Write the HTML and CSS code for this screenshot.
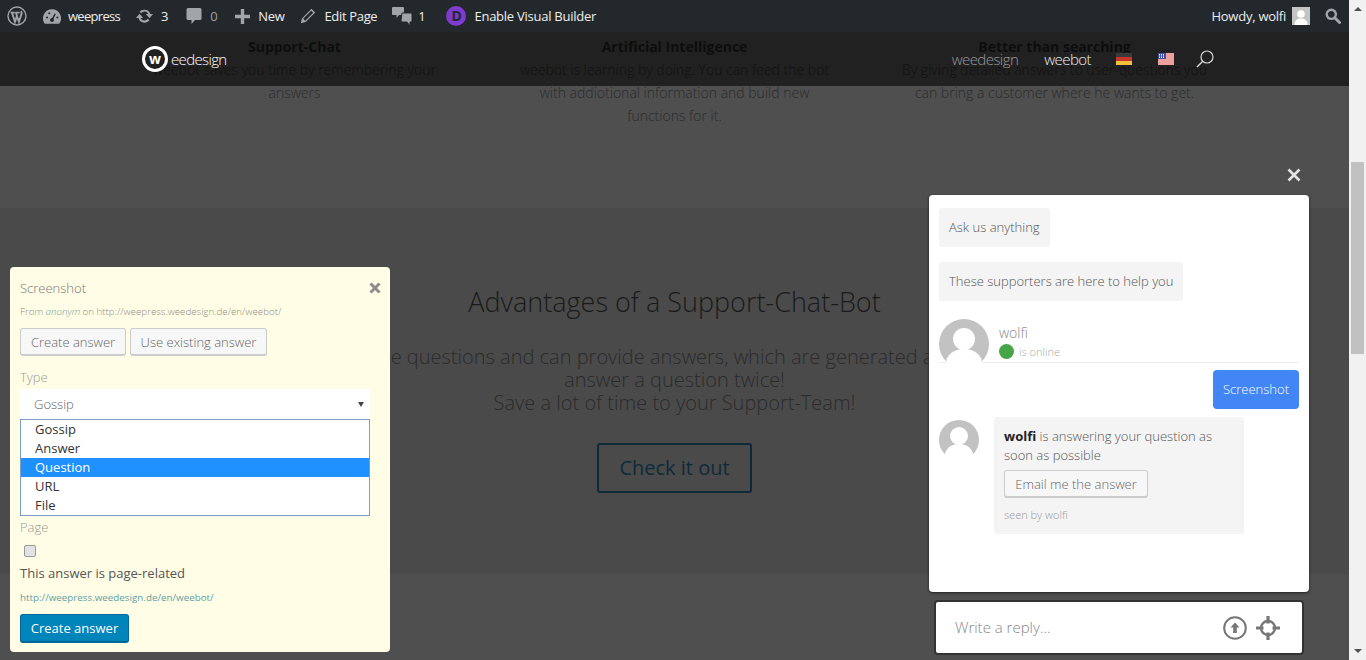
FILE: index.html
```html
<!DOCTYPE html>
<html lang="en">
<head>
<meta charset="utf-8">
<title>weebot</title>
<link rel="stylesheet" href="styles.css">
</head>
<body>
<div class="shell">
  <div class="viewport">
    <header class="adminbar">
      <div class="ab-group">
        <svg class="ab-wp" viewBox="0 0 20 20"><circle cx="10" cy="10" r="9" fill="none" stroke="#a0a5aa" stroke-width="1.4"/><path d="M3.600 6.600h4.200M8.200 6.600h4.400M5 6.800l3 9 2.200-6.400M8.900 6.800l3 9 2.400-7c.5-1.400.3-2.700-.4-3.600" fill="none" stroke="#a0a5aa" stroke-width="1.900"/></svg>
        <span class="ab-item ab-site"><svg class="ab-ico ab-gauge" viewBox="0 0 20 16"><path d="M10 0a10 10 0 0 0-8 16h16a10 10 0 0 0-8-16z" fill="#a0a5aa"/><circle cx="10" cy="12" r="2.200" fill="#23282d"/><path d="M10 12l3.500-7" stroke="#23282d" stroke-width="1.600"/><circle cx="4.500" cy="9" r="1.100" fill="#23282d"/><circle cx="7" cy="4.500" r="1.100" fill="#23282d"/><circle cx="16" cy="9" r="1.100" fill="#23282d"/></svg>weepress</span>
        <span class="ab-item ab-updates"><svg class="ab-ico ab-refresh" viewBox="0 0 20 16"><path d="M10 1.500A6.500 6.500 0 0 1 16.200 6H19l-3.800 4.400L11.400 6h2.600A4.300 4.300 0 0 0 6.600 5L4.700 3.400A6.500 6.500 0 0 1 10 1.500zM1 10l3.800-4.400L8.600 10H6a4.300 4.300 0 0 0 7.400 1l1.900 1.600A6.500 6.500 0 0 1 3.800 10z" fill="#a0a5aa"/></svg>3</span>
        <span class="ab-item ab-comments ab-dim"><svg class="ab-ico ab-bubble" viewBox="0 0 16 18"><path d="M2 1h12a1.500 1.500 0 0 1 1.500 1.500v9A1.500 1.500 0 0 1 14 13h-5l-3.500 4v-4H2a1.500 1.500 0 0 1-1.500-1.500v-9A1.500 1.500 0 0 1 2 1z" fill="#a0a5aa"/></svg>0</span>
        <span class="ab-item ab-new"><svg class="ab-ico ab-plus" viewBox="0 0 15 15"><path d="M5.800 0h3.400v5.800H15v3.400H9.200V15H5.800V9.200H0V5.800h5.800z" fill="#a0a5aa"/></svg>New</span>
        <span class="ab-item ab-edit"><svg class="ab-ico ab-pencil" viewBox="0 0 16 16"><path d="M11.500.8l3.700 3.700L5.600 14.100 .8 15.200l1.100-4.800zM3.200 10.800l2 2 8-8-2-2z" fill="#a0a5aa" fill-rule="evenodd"/></svg>Edit Page</span>
        <span class="ab-item ab-mod"><svg class="ab-ico ab-bubbles" viewBox="0 0 20 20"><path d="M1 1h10a1 1 0 0 1 1 1v6a1 1 0 0 1-1 1H7l-2.500 3V9H1a1 1 0 0 1-1-1V2a1 1 0 0 1 1-1z" fill="#a0a5aa"/><path d="M10 7h9a1 1 0 0 1 1 1v7a1 1 0 0 1-1 1h-1v4l-3-4h-5a1 1 0 0 1-1-1z" fill="#a0a5aa" stroke="#23282d"/></svg>1</span>
        <span class="ab-item ab-divi"><span class="divi-badge">D</span>Enable Visual Builder</span>
      </div>
      <div class="ab-group">
        <span class="ab-howdy">Howdy, wolfi</span>
        <svg class="ab-avatar" viewBox="0 0 18 18"><rect width="18" height="18" fill="#c4c4c4"/><circle cx="9" cy="7" r="3.800" fill="#fff"/><path d="M2.500 18c0-5 3-6.500 6.500-6.500s6.500 1.500 6.500 6.500z" fill="#fff"/></svg>
        <svg class="ab-search" viewBox="0 0 16 16"><circle cx="6.300" cy="6.300" r="4.600" fill="none" stroke="#a0a5aa" stroke-width="2.400"/><path d="M9.800 9.800l4.700 4.700" stroke="#a0a5aa" stroke-width="3" stroke-linecap="round"/></svg>
      </div>
    </header>

    <main class="page">
      <section class="features">
        <div class="feature">
          <h3>Support-Chat</h3>
          <p>weebot saves you time by remembering your answers</p>
        </div>
        <div class="feature">
          <h3>Artificial Intelligence</h3>
          <p>weebot is learning by doing. You can feed the bot with addiotional information and build new functions for it.</p>
        </div>
        <div class="feature">
          <h3>Better than searching</h3>
          <p>By giving detailed answers to user-questions you can bring a customer where he wants to get.</p>
        </div>
      </section>
      <section class="advantages">
        <h2>Advantages of a Support-Chat-Bot</h2>
        <p>weebot understands the questions and can provide answers, which are generated automatically. So you never<br>answer a question twice!<br>Save a lot of time to your Support-Team!</p>
        <a class="check-btn">Check it out</a>
      </section>
      <section class="lower"></section>
    </main>

    <nav class="sitenav">
      <div class="logo">
        <span class="logo-mark">w</span><span class="logo-text">eedesign</span>
      </div>
      <div class="menu">
        <span class="menu-item">weedesign</span>
        <span class="menu-item menu-active">weebot</span>
        <svg class="flag flag-de" viewBox="0 0 16 12"><rect width="16" height="4" fill="#3a3a3a"/><rect y="4" width="16" height="4" fill="#c8332b"/><rect y="8" width="16" height="4" fill="#f0c23c"/></svg>
        <svg class="flag flag-us" viewBox="0 0 16 12"><rect width="16" height="12" fill="#fff"/><path d="M0 1h16M0 3h16M0 5h16M0 7h16M0 9h16M0 11h16" stroke="#d8433c"/><rect width="8" height="6" fill="#3f4fa8"/><path d="M1 1.500h6M1 3h6M1 4.500h6" stroke="#fff" stroke-dasharray="1 1"/></svg>
        <svg class="nav-search" viewBox="0 0 18 18"><circle cx="11" cy="7" r="6" fill="none" stroke="#d8d8d8" stroke-width="1.200"/><path d="M6.800 11.300L1 17" stroke="#d8d8d8" stroke-width="1.400"/></svg>
      </div>
    </nav>

    <aside class="ticket">
      <div class="ticket-head">
        <span class="ticket-title">Screenshot</span>
        <svg class="ticket-close" viewBox="0 0 12 12"><path d="M1.500 1.500l9 9M10.500 1.500l-9 9" stroke="#8c8c8c" stroke-width="3"/></svg>
      </div>
      <div class="ticket-from">From <em>anonym</em> on http://weepress.weedesign.de/en/weebot/</div>
      <div class="ticket-actions">
        <span class="ghost-btn btn-create">Create answer</span>
        <span class="ghost-btn btn-existing">Use existing answer</span>
      </div>
      <div class="field-label label-type">Type</div>
      <div class="select-box"><span>Gossip</span><i class="select-arrow"></i></div>
      <ul class="select-list">
        <li>Gossip</li>
        <li>Answer</li>
        <li class="selected">Question</li>
        <li>URL</li>
        <li>File</li>
      </ul>
      <div class="field-label label-page">Page</div>
      <input class="page-check" type="checkbox">
      <div class="check-label">This answer is page-related</div>
      <div class="ticket-link">http://weepress.weedesign.de/en/weebot/</div>
      <span class="primary-btn">Create answer</span>
    </aside>

    <svg class="chat-close" viewBox="0 0 14 14"><path d="M1.500 1.500l11 11M12.500 1.500l-11 11" stroke="#e6e6e6" stroke-width="2.600"/></svg>

    <aside class="chat">
      <div class="bubble bubble-first">Ask us anything</div>
      <div class="bubble bubble-second">These supporters are here to help you</div>
      <div class="agent">
        <svg class="avatar avatar-lg" viewBox="0 0 50 50"><circle cx="25" cy="25" r="25" fill="#c2c2c2"/><circle cx="25" cy="20" r="11" fill="#fff"/><ellipse cx="25" cy="44" rx="18" ry="14" fill="#fff"/></svg>
        <div class="agent-info">
          <div class="agent-name">wolfi</div>
          <div class="agent-status"><i class="dot"></i>is online</div>
        </div>
      </div>
      <div class="own-row"><div class="bubble-own">Screenshot</div></div>
      <div class="reply">
        <svg class="avatar avatar-sm" viewBox="0 0 40 40"><circle cx="20" cy="20" r="20" fill="#c2c2c2"/><circle cx="20" cy="16" r="9" fill="#fff"/><ellipse cx="20" cy="35" rx="14" ry="11" fill="#fff"/></svg>
        <div class="reply-card">
          <p><b>wolfi</b> is answering your question as soon as possible</p>
          <span class="ghost-btn btn-email">Email me the answer</span>
          <div class="seen">seen by wolfi</div>
        </div>
      </div>
    </aside>

    <div class="composer">
      <span class="composer-text">Write a reply...</span>
      <svg class="composer-ico ico-upload" viewBox="0 0 24 24"><circle cx="12" cy="12" r="10.800" fill="none" stroke="#777" stroke-width="2"/><path d="M12 6.500l4.500 5h-2.700v5.500h-3.600v-5.500H7.500z" fill="#777"/></svg>
      <svg class="composer-ico ico-target" viewBox="0 0 24 24"><circle cx="12" cy="12" r="7" fill="none" stroke="#777" stroke-width="2.400"/><path d="M12 0v7.500M12 16.500v7.500M0 12h7.500M16.500 12h7.500" stroke="#777" stroke-width="3.200"/></svg>
    </div>
  </div>

  <div class="scrollbar">
    <i class="sb-up"></i>
    <div class="sb-track"><div class="sb-thumb"></div></div>
    <i class="sb-down"></i>
  </div>
</div>
</body>
</html>
```

FILE: styles.css
```css
* { box-sizing: border-box; }
html, body { margin: 0; height: 100%; overflow: hidden; }
body { font-family: "Open Sans", "Liberation Sans", sans-serif; color: #2b2b2b; background: #4f4f4f; }

.shell { display: flex; width: 1366px; height: 660px; }
.viewport { position: relative; flex: 1; height: 660px; overflow: hidden; display: flex; flex-direction: column; }

/* Admin bar */
.adminbar { flex: none; height: 32px; background: #23282d; display: flex; justify-content: space-between; align-items: center; color: #eee; font-size: 13px; letter-spacing: -.33px; line-height: 32px; position: relative; z-index: 3; }
.ab-group { display: flex; align-items: center; }
.ab-wp { width: 20px; height: 20px; margin-left: 7px; margin-right: 1px; }
.ab-item { display: flex; align-items: center; }
.ab-dim { color: #9aa0a5; }
.ab-ico { flex: none; }
.ab-site { margin-left: 15px; letter-spacing: -.7px; }
.ab-gauge { width: 18px; height: 15px; margin-right: 7px; }
.ab-updates { margin-left: 15px; }
.ab-refresh { width: 19px; height: 16px; margin-right: 7px; }
.ab-comments { margin-left: 18px; }
.ab-bubble { width: 16px; height: 18px; margin-right: 8px; }
.ab-new { margin-left: 18px; }
.ab-plus { width: 15px; height: 15px; margin-right: 8px; }
.ab-edit { margin-left: 16px; }
.ab-pencil { width: 16px; height: 16px; margin-right: 8px; }
.ab-mod { margin-left: 15px; }
.ab-bubbles { width: 20px; height: 20px; margin-right: 6px; }
.ab-divi { margin-left: 21px; letter-spacing: -.25px; }
.divi-badge { width: 20px; height: 20px; margin-right: 8px; border-radius: 50%; background: #7e3bd0; color: #23282d; font-size: 14px; font-weight: 700; line-height: 20px; text-align: center; }
.ab-howdy { margin-right: 6px; letter-spacing: -.25px; }
.ab-avatar { width: 18px; height: 18px; margin-right: 15px; }
.ab-search { width: 16px; height: 16px; margin-right: 8px; }

/* Page under the overlay */
.page { flex: 1; display: flex; flex-direction: column; }
.features { height: 176px; background: #4f4f4f; display: flex; justify-content: center; padding-top: 5px; }
.feature { width: 380px; text-align: center; padding: 0 30px; }
.feature h3 { margin: 0; font-size: 14px; line-height: 20px; font-weight: 700; color: #1f1f1f; }
.feature p { margin: 1px 0 0; font-size: 14px; line-height: 23px; font-weight: 300; color: #2b2b2b; }
.advantages { height: 366px; background: #4a4a4a; text-align: center; display: flex; flex-direction: column; align-items: center; padding-top: 75px; overflow: hidden; }
.advantages h2 { margin: 0; font-size: 27px; line-height: 38px; font-weight: 300; color: #1a1a1a; white-space: nowrap; }
.advantages p { margin: 24px 0 0; font-size: 20px; line-height: 23px; font-weight: 300; color: #2b2b2b; white-space: nowrap; }
.check-btn { margin-top: 29px; width: 155px; height: 50px; border: 2px solid #0d2a38; border-radius: 3px; font-size: 20px; line-height: 46px; color: #0e2a38; }
.lower { flex: 1; background: #4f4f4f; }

/* Translucent site nav */
.sitenav { position: absolute; top: 32px; left: 0; right: 0; height: 54px; background: rgba(0, 0, 0, .58); display: flex; justify-content: space-between; align-items: center; padding: 0 135px 0 142px; }
.logo { display: flex; align-items: center; color: #fff; }
.logo-mark { width: 26px; height: 26px; border: 3px solid #fff; border-radius: 50%; font-size: 14px; font-weight: 700; line-height: 19px; text-align: center; }
.logo-text { margin-left: 3px; font-size: 15px; font-weight: 300; letter-spacing: -.65px; }
.menu { display: flex; align-items: center; font-size: 15px; font-weight: 300; letter-spacing: -.55px; }
.menu-item { color: #9a9a9a; }
.menu-active { color: #ededed; margin-left: 26px; }
.flag { width: 16px; height: 12px; }
.flag-de { margin-left: 25px; }
.flag-us { margin-left: 26px; }
.nav-search { width: 18px; height: 18px; margin-left: 22px; }

/* Ticket panel */
.ticket { position: absolute; left: 10px; top: 267px; width: 380px; height: 385px; padding: 11px 20px 0 10px; background: #fffde6; border-radius: 4px; color: #777; font-size: 13px; }
.ticket-head { display: flex; justify-content: space-between; align-items: center; height: 20px; }
.ticket-title { font-weight: 300; line-height: 20px; color: #777; }
.ticket-close { width: 12px; height: 12px; margin-right: -11px; }
.ticket-from { margin-top: 7px; font-size: 9.750px; line-height: 14px; font-weight: 300; color: #8e8e80; }
.ticket-from em { color: #6fa5a0; }
.ticket-actions { display: flex; gap: 4px; margin-top: 9px; }
.ghost-btn { display: block; height: 28px; border: 1px solid #ccc; border-bottom-width: 2px; border-radius: 3px; background: #f7f7f7; font-weight: 300; font-size: 13px; line-height: 26px; text-align: center; color: #666; }
.btn-create { width: 106px; }
.btn-existing { width: 137px; }
.field-label { font-weight: 300; font-size: 13px; line-height: 18px; color: #9a9a90; }
.label-type { margin-top: 12px; }
.select-box { margin-top: 3px; height: 30px; background: #fff; display: flex; justify-content: space-between; align-items: center; padding: 0 6px 0 14px; font-weight: 300; color: #666; }
.select-arrow { width: 0; height: 0; border: 3px solid transparent; border-top: 5px solid #444; border-bottom: 0; }
.select-list { list-style: none; margin: 0; padding: 0; height: 97px; border: 1px solid #7a9cc6; background: #fff; color: #333; line-height: 19px; font-weight: 400; }
.select-list li { padding-left: 14px; height: 19px; }
.select-list .selected { background: #1e90ff; color: #fff; }
.label-page { margin-top: 2px; }
.page-check { display: block; appearance: none; width: 12px; height: 12px; margin: 9px 0 0 4px; border: 1px solid #9a9a9a; border-radius: 2px; background: #e2e2e2; }
.check-label { margin-top: 6px; line-height: 20px; color: #555; font-weight: 400; }
.ticket-link { margin-top: 8px; font-size: 9.800px; line-height: 14px; color: #5f9ea0; }
.primary-btn { display: block; margin-top: 9px; width: 109px; height: 29px; background: #0085ba; border: 1px solid #006799; border-bottom-width: 2px; border-radius: 3px; color: #fff; text-align: center; line-height: 26px; font-size: 13px; }

/* Chat */
.chat-close { position: absolute; left: 1287px; top: 168px; width: 14px; height: 14px; }
.chat { position: absolute; left: 929px; top: 195px; width: 380px; height: 397px; padding: 13px 10px 0; background: #fff; border-radius: 4px; box-shadow: 0 1px 3px rgba(0, 0, 0, .6); font-size: 13px; font-weight: 300; color: #555; }
.bubble { height: 39px; line-height: 39px; padding: 0 10px; background: #f4f4f4; border-radius: 3px; width: max-content; }
.bubble-second { margin-top: 15px; }
.agent { display: flex; height: 44px; margin-top: 18px; border-bottom: 1px solid #eee; }
.avatar { flex: none; display: block; }
.avatar-lg { width: 50px; height: 50px; }
.agent-info { margin-left: 10px; }
.agent-name { margin-top: 3px; font-size: 14px; line-height: 22px; color: #888; }
.agent-status { display: flex; align-items: center; font-size: 11px; line-height: 15px; color: #aaa; }
.dot { width: 15px; height: 15px; margin-right: 5px; border-radius: 50%; background: #46a546; }
.own-row { display: flex; justify-content: flex-end; margin-top: 7px; }
.bubble-own { height: 39px; line-height: 39px; padding: 0 10px; background: #4285f4; border-radius: 4px; color: #fff; }
.reply { display: flex; margin-top: 8px; }
.avatar-sm { width: 40px; height: 40px; margin-top: 3px; }
.reply-card { margin-left: 15px; width: 250px; height: 117px; padding: 10px; background: #f4f4f4; border-radius: 3px; }
.reply-card p { margin: 0; line-height: 19px; }
.reply-card b { font-weight: 700; color: #222; }
.btn-email { width: 144px; margin-top: 5px; background: #f7f7f7; }
.seen { margin-top: 9px; font-size: 11px; line-height: 16px; color: #999; }

.composer { position: absolute; left: 934px; top: 600px; width: 370px; height: 55px; padding: 0 22px 0 19px; background: #fff; border: 2px solid #333; border-radius: 4px; display: flex; align-items: center; }
.composer-text { flex: 1; padding-bottom: 2px; font-size: 15px; font-weight: 300; color: #888; }
.composer-ico { width: 24px; height: 24px; }
.ico-target { margin-left: 9px; }

/* Scrollbar */
.scrollbar { flex: none; width: 17px; height: 660px; background: #f1f1f1; display: flex; flex-direction: column; align-items: center; }
.sb-up, .sb-down { flex: none; width: 0; height: 0; border: 4px solid transparent; }
.sb-up { border-bottom: 4px solid #505050; border-top: 0; margin-top: 7px; }
.sb-down { border-top: 4px solid #505050; border-bottom: 0; margin-bottom: 7px; }
.sb-track { flex: 1; width: 100%; padding: 151px 2px 0; }
.sb-thumb { width: 13px; height: 192px; background: #c1c1c1; }
```
